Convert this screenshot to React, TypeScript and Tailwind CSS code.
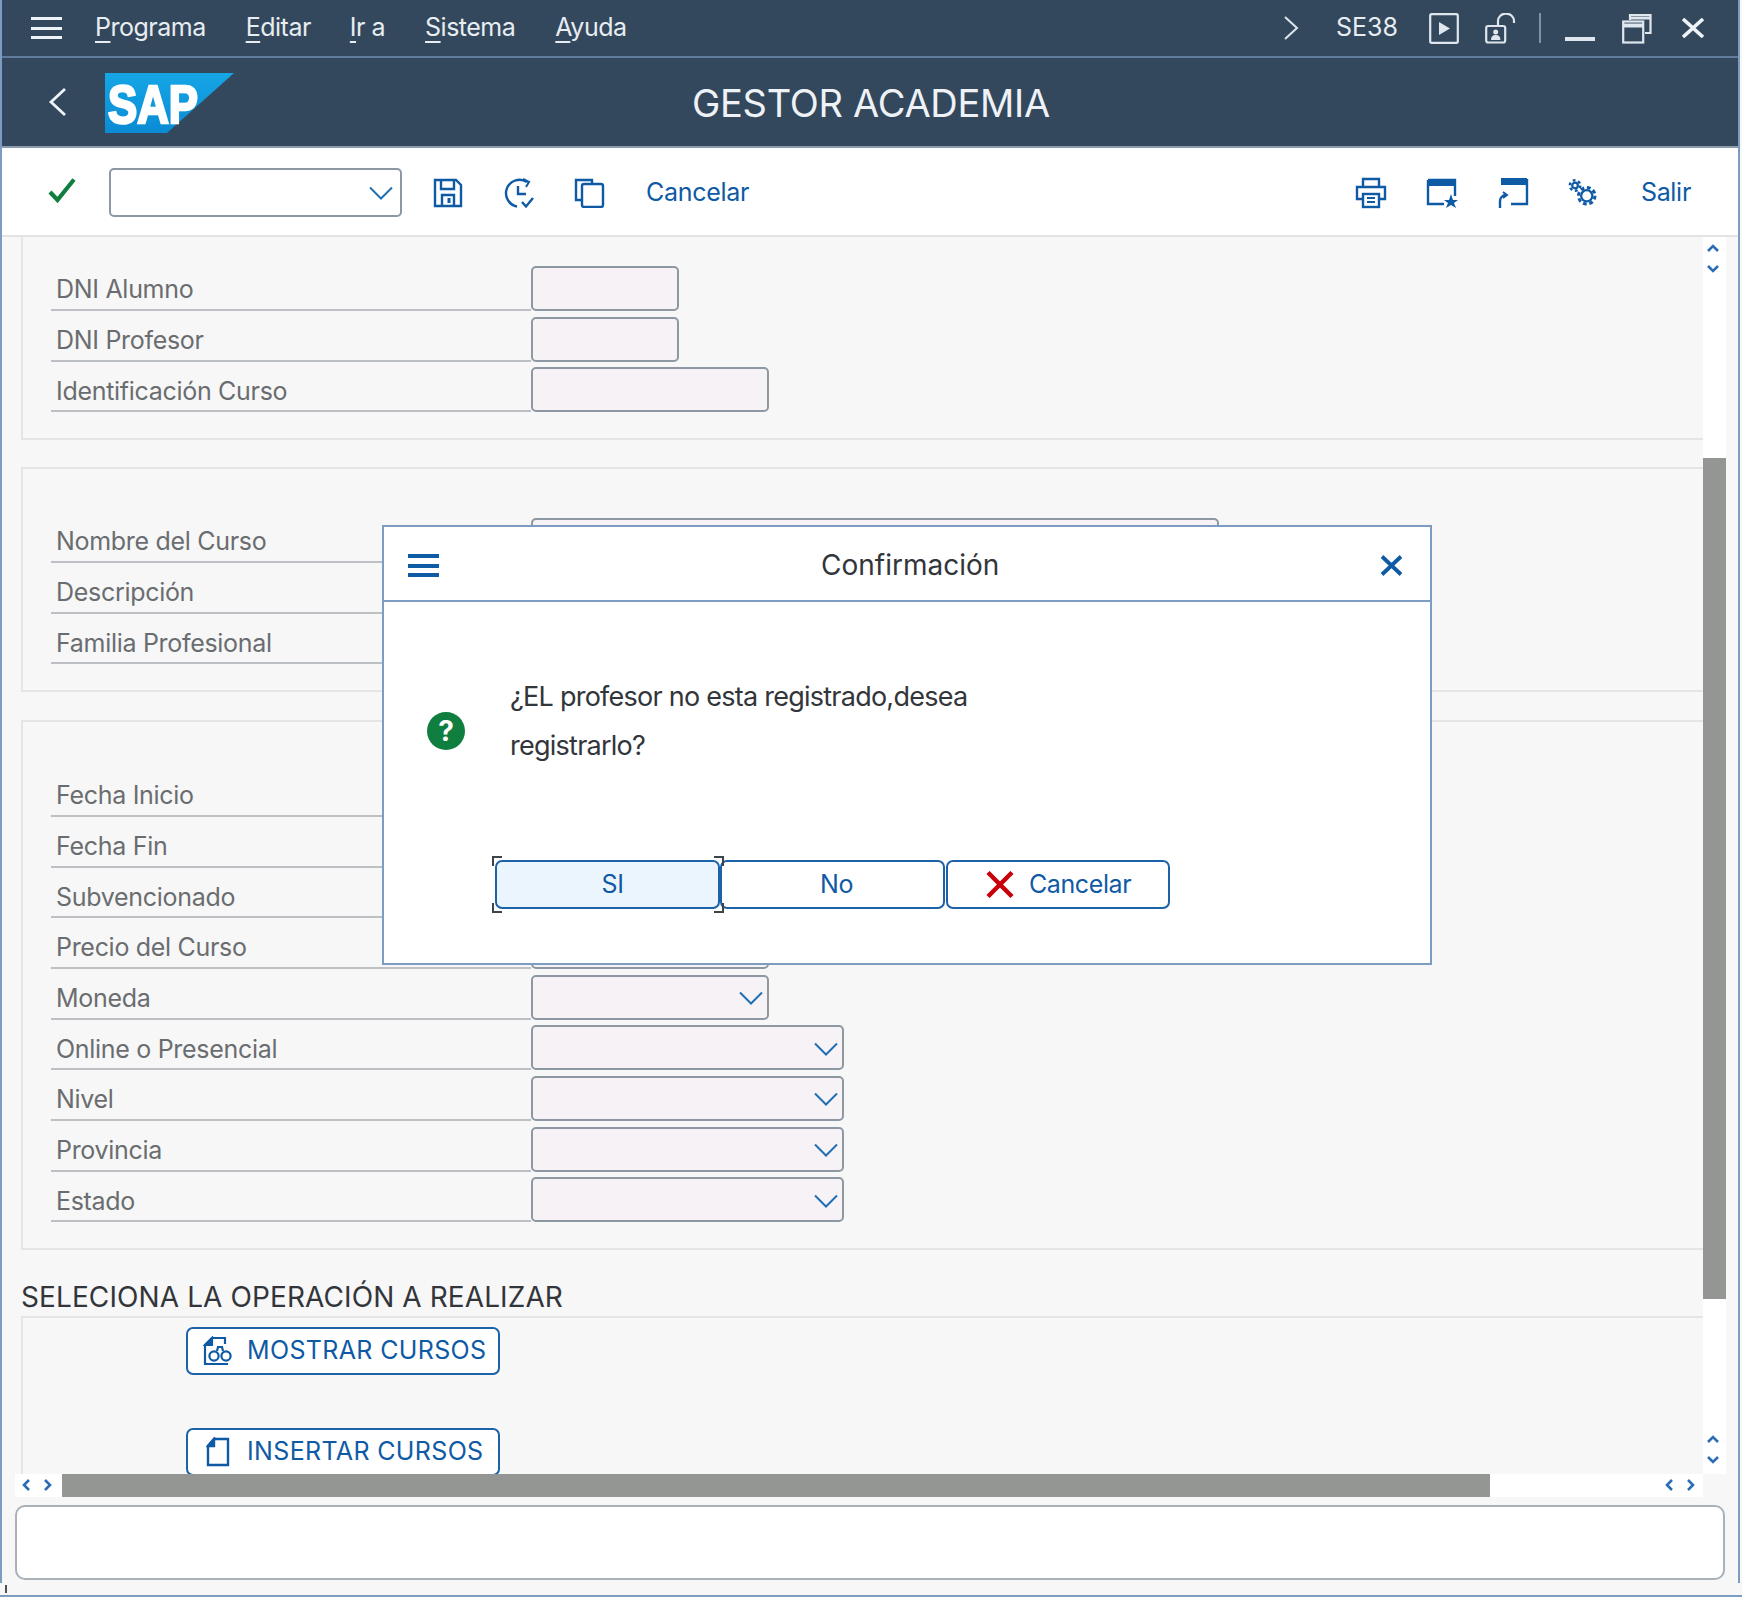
import React from "react";

const font = { fontFamily: "Inter, 'Liberation Sans', sans-serif" };

function Chevron() {
  return (
    <svg width="24" height="14" viewBox="0 0 24 14" fill="none" stroke="#1f6fb5" strokeWidth="2">
      <path d="M1 1.5 L12 12.5 L23 1.5" />
    </svg>
  );
}

function Field({ label, width, select }: { label: string; width?: number; select?: boolean }) {
  return (
    <div className="flex h-[44px] ml-[28px]">
      <div className="w-[480px] h-[44px] border-b-2 border-[#bcc0c4] pl-[5px] pt-[4px] flex items-center text-[25px] tracking-[-0.3px] text-[#6a6d70]">
        {label}
      </div>
      {width ? (
        <div
          className="h-[45px] -mt-[1px] rounded-[5px] border-2 border-[#8d98a3] bg-[#f7f2f6] flex items-center justify-end pr-[4px] pt-[2px]"
          style={{ width }}
        >
          {select ? <Chevron /> : null}
        </div>
      ) : null}
    </div>
  );
}

function Section({ children, className }: { children: React.ReactNode; className: string }) {
  return (
    <div className={"border-l-2 border-b-2 border-[#e5e5e5] flex flex-col gap-[6.67px] shrink-0 " + className}>{children}</div>
  );
}

function TIcon({ children, w = 32, h = 32 }: { children: React.ReactNode; w?: number; h?: number }) {
  return (
    <svg width={w} height={h} viewBox={`0 0 ${w} ${h}`} fill="none" stroke="#0f5aa5" strokeWidth="2.4">
      {children}
    </svg>
  );
}

function VArrows() {
  return (
    <div className="flex flex-col items-center gap-[13px]">
      <svg width="12" height="8" viewBox="0 0 12 8" fill="none" stroke="#2b6cb5" strokeWidth="2.6">
        <path d="M1 7 L6 2 L11 7" />
      </svg>
      <svg width="12" height="8" viewBox="0 0 12 8" fill="none" stroke="#2b6cb5" strokeWidth="2.6">
        <path d="M1 1 L6 6 L11 1" />
      </svg>
    </div>
  );
}

function HArrows() {
  return (
    <div className="flex items-center gap-[14px] pb-[2px]">
      <svg width="8" height="12" viewBox="0 0 8 12" fill="none" stroke="#2b6cb5" strokeWidth="2.6">
        <path d="M7 1 L2 6 L7 11" />
      </svg>
      <svg width="8" height="12" viewBox="0 0 8 12" fill="none" stroke="#2b6cb5" strokeWidth="2.6">
        <path d="M1 1 L6 6 L1 11" />
      </svg>
    </div>
  );
}

function Burger({ color, w, h, t }: { color: string; w: number; h: number; t: number }) {
  return (
    <div className="flex flex-col justify-between" style={{ width: w, height: h }}>
      <div style={{ height: t, background: color }} />
      <div style={{ height: t, background: color }} />
      <div style={{ height: t, background: color }} />
    </div>
  );
}

function ActionButton({ icon, label, className }: { icon: React.ReactNode; label: string; className: string }) {
  return (
    <div
      className={
        "w-[314px] h-[48px] shrink-0 rounded-[7px] border-2 border-[#1c62a8] bg-white flex items-center pl-[14px] text-[25px] tracking-[0.35px] text-[#0f5aa5] " +
        className
      }
    >
      <div className="w-[32px] flex justify-center">{icon}</div>
      <span className="ml-[13px]">{label}</span>
    </div>
  );
}

function Corner({ className }: { className: string }) {
  return <div className={"absolute w-[10px] h-[10px] border-[#3f4448] " + className} />;
}

function MenuItem({ first, rest, className }: { first: string; rest: string; className: string }) {
  return (
    <span className={className}>
      <span className="underline decoration-2 underline-offset-[5px]">{first}</span>
      {rest}
    </span>
  );
}

export default function App() {
  return (
    <div className="w-[1742px] h-[1597px] bg-[#f7f7f7] flex flex-col overflow-hidden" style={font}>
      <div className="w-[1740px] h-[1583px] shrink-0 border-x-2 border-[#7d9cc2] relative flex flex-col">
        {/* Top menu bar */}
        <div className="h-[58px] shrink-0 bg-[#33485c] border-b-2 border-[#607c9b] flex items-center text-[25px] tracking-[-0.5px] text-[#e8edf2]">
          <div className="ml-[29px]">
            <Burger color="#eef3f8" w={31} h={22} t={3} />
          </div>
          <MenuItem first="P" rest="rograma" className="ml-[33px]" />
          <MenuItem first="E" rest="ditar" className="ml-[40px]" />
          <MenuItem first="I" rest="r a" className="ml-[39px]" />
          <MenuItem first="S" rest="istema" className="ml-[40px]" />
          <MenuItem first="A" rest="yuda" className="ml-[40px]" />
          <div className="ml-auto flex items-center">
            <svg width="16" height="24" viewBox="0 0 16 24" fill="none" stroke="#dfe6ee" strokeWidth="2">
              <path d="M2 1 L14 12 L2 23" />
            </svg>
            <span className="ml-[37px] w-[62px] tracking-[0px] text-[#e8edf2]">SE38</span>
            <svg className="ml-[31px]" width="30" height="31" viewBox="0 0 30 31" fill="none" stroke="#dfe6ee" strokeWidth="2.2">
              <rect x="1.2" y="1.2" width="27.6" height="28.6" rx="1.5" />
              <path d="M10 9 L21 15.5 L10 22 Z" fill="#dfe6ee" stroke="none" />
            </svg>
            <svg className="ml-[26px]" width="31" height="31" viewBox="0 0 31 31" fill="none" stroke="#dfe6ee" strokeWidth="2.2">
              <rect x="1.2" y="13" width="19" height="16.5" rx="2" />
              <path d="M13 13 V8 a7.5 7 0 0 1 16 0 V10" />
              <circle cx="10.7" cy="19" r="2.5" fill="#dfe6ee" stroke="none" />
              <path d="M6 27 q0 -5 4.7 -5 q4.7 0 4.7 5 Z" fill="#dfe6ee" stroke="none" />
            </svg>
            <div className="ml-[23px] w-[2px] h-[30px] bg-[#7f93a6]" />
            <div className="ml-[24px] w-[30px] h-[30px] flex items-end pb-[2px]">
              <div className="w-[30px] h-[4px] bg-[#dfe6ee]" />
            </div>
            <svg className="ml-[27px]" width="30" height="31" viewBox="0 0 30 31" fill="none" stroke="#dfe6ee" strokeWidth="2.2">
              <rect x="1.2" y="8.5" width="20" height="21" />
              <path d="M1.2 12.5 H21" strokeWidth="4" />
              <path d="M8 7 V2 H28.5 V20 H23" />
              <path d="M8 5 H28.5" strokeWidth="3" />
            </svg>
            <svg className="ml-[29px] mr-[33px]" width="24" height="20" viewBox="0 0 24 20" fill="none" stroke="#eef3f8" strokeWidth="3.6">
              <path d="M2 1 L22 19 M22 1 L2 19" />
            </svg>
          </div>
        </div>

        {/* Title bar */}
        <div className="h-[90px] shrink-0 bg-[#33485c] border-b-2 border-[#8b9bab] flex items-center relative">
          <svg className="ml-[46px]" width="20" height="30" viewBox="0 0 20 30" fill="none" stroke="#eef3f8" strokeWidth="2.8">
            <path d="M17 2 L3 15 L17 28" />
          </svg>
          <svg className="ml-[37px] mt-[1px]" width="129" height="60" viewBox="0 0 129 60">
            <defs>
              <linearGradient id="sapg" x1="0" y1="0" x2="0" y2="1">
                <stop offset="0" stopColor="#16a6e6" />
                <stop offset="1" stopColor="#0a8bd4" />
              </linearGradient>
            </defs>
            <polygon points="0,0 129,0 62,60 0,60" fill="url(#sapg)" />
            <text
              x="3"
              y="50"
              fontFamily="'Liberation Sans', sans-serif"
              fontWeight="700"
              fontSize="54"
              textLength="90"
              lengthAdjust="spacingAndGlyphs"
              fill="#ffffff"
              stroke="#ffffff"
              strokeWidth="2.6"
            >
              SAP
            </text>
          </svg>
          <div className="absolute left-[690px] top-[22px] text-[38px] leading-[46px] tracking-[-0.3px] text-[#eef2f6]">GESTOR ACADEMIA</div>
        </div>

        {/* Toolbar */}
        <div className="h-[89px] shrink-0 bg-white border-b-2 border-[#e3e3e3] pt-[2px] flex items-center text-[25px] tracking-[-0.3px] text-[#0f5aa5]">
          <svg className="ml-[46px] -mt-[4px]" width="28" height="25" viewBox="0 0 28 25" fill="none" stroke="#107e3e" strokeWidth="4.2">
            <path d="M2 14 L9.5 22 L26 1.5" />
          </svg>
          <div className="ml-[33px] w-[293px] h-[49px] rounded-[5px] border-2 border-[#8d98a3] bg-white flex items-center justify-end pr-[7px]">
            <Chevron />
          </div>
          <div className="ml-[31px]">
            <TIcon w={30} h={30}>
              <path d="M2 2 H23 L28 7 V28 H2 Z" />
              <path d="M8 2 V11 H21 V2" />
              <path d="M9 28 V17 H21 V28" />
              <path d="M16 20 V25" strokeWidth="3" />
            </TIcon>
          </div>
          <div className="ml-[40px]">
            <TIcon w={32} h={32}>
              <path d="M24 5 A13.5 13.5 0 1 0 14 29.5" />
              <path d="M15 9 V17 H23" />
              <path d="M19 25 L23 29.5 L30 21" />
              <path d="M20 2 L26 5 L23 10" strokeWidth="2" />
            </TIcon>
          </div>
          <div className="ml-[39px]">
            <TIcon w={32} h={30}>
              <path d="M8 22 H2 V2 H18 V6" />
              <rect x="8" y="6" width="21" height="23" rx="2" />
            </TIcon>
          </div>
          <span className="ml-[40px]">Cancelar</span>
          <div className="ml-auto flex items-center">
            <TIcon w={32} h={32}>
              <path d="M8 10 V2 H24 V10" />
              <path d="M8 22 H2 V10 H30 V22 H24" />
              <rect x="8" y="17" width="16" height="13" />
              <path d="M12 21 H20 M12 25 H20" strokeWidth="2" />
            </TIcon>
            <div className="ml-[39px]">
              <TIcon w={32} h={30}>
                <path d="M2 2 H29 V18" />
                <path d="M2 2 V26 H18" />
                <rect x="2" y="1" width="27" height="7" fill="#0f5aa5" stroke="none" />
                <path d="M25 16 L27 22 H32 L28 25 L30 30 L25 27 L20 30 L22 25 L18 22 H23 Z" fill="#0f5aa5" stroke="none" />
              </TIcon>
            </div>
            <div className="ml-[39px]">
              <TIcon w={32} h={32}>
                <path d="M30 2 V27 H14" />
                <rect x="4" y="1" width="26" height="7" fill="#0f5aa5" stroke="none" />
                <path d="M9 18 A6 6 0 0 0 3 24 V31" />
                <path d="M6 15 L10 18 L6 21" strokeWidth="2" />
              </TIcon>
            </div>
            <div className="ml-[39px]">
              <svg width="30" height="30" viewBox="0 0 32 30" fill="none" stroke="#0f5aa5">
                <circle cx="7.5" cy="7" r="3" strokeWidth="2.4" />
                <circle cx="7.5" cy="7" r="5.6" strokeWidth="2.6" strokeDasharray="3 2.8" />
                <circle cx="20" cy="18" r="6" strokeWidth="2.4" />
                <circle cx="20" cy="18" r="8.8" strokeWidth="3.2" strokeDasharray="4 2.9" />
              </svg>
            </div>
            <span className="ml-[43px] mr-[47px]">Salir</span>
          </div>
        </div>

        {/* Scrollable work area */}
        <div className="h-[1237px] shrink-0 flex pl-[13px]">
          <div className="w-[1688px] overflow-hidden pl-[6px] flex flex-col">
            <Section className="h-[203px] pt-[30px]">
              <Field label="DNI Alumno" width={148} />
              <Field label="DNI Profesor" width={148} />
              <Field label="Identificación Curso" width={238} />
            </Section>
            <Section className="h-[225px] mt-[27px] border-t-2 pt-[50px]">
              <Field label="Nombre del Curso" width={688} />
              <Field label="Descripción" width={688} />
              <Field label="Familia Profesional" width={313} select />
            </Section>
            <Section className="h-[530px] mt-[28px] border-t-2 pt-[51px]">
              <Field label="Fecha Inicio" width={238} />
              <Field label="Fecha Fin" width={238} />
              <Field label="Subvencionado" width={238} select />
              <Field label="Precio del Curso" width={238} />
              <Field label="Moneda" width={238} select />
              <Field label="Online o Presencial" width={313} select />
              <Field label="Nivel" width={313} select />
              <Field label="Provincia" width={313} select />
              <Field label="Estado" width={313} select />
            </Section>
            <div className="h-[66px] shrink-0 flex items-end pb-[2px] text-[28px] leading-[34px] tracking-[0.1px] text-[#32363a]">
              SELECIONA LA OPERACIÓN A REALIZAR
            </div>
            <div className="border-l-2 border-t-2 border-[#e5e5e5] flex-1 min-h-0 pt-[9px] pl-[163px] flex flex-col">
              <ActionButton
                label="MOSTRAR CURSOS"
                className=""
                icon={
                  <svg width="30" height="30" viewBox="0 0 30 30" fill="none" stroke="#0f5aa5" strokeWidth="2.2">
                    <path d="M9 2 H22 V8" />
                    <path d="M9 2 L2 9 V28 H25" />
                    <path d="M2 9 H9 V2 Z" fill="#0f5aa5" />
                    <circle cx="11" cy="20" r="4.6" />
                    <circle cx="23" cy="20" r="4.6" />
                    <path d="M14 15 L15 11 H19 L20 15" />
                  </svg>
                }
              />
              <ActionButton
                label="INSERTAR CURSOS"
                className="mt-[53px]"
                icon={
                  <svg width="24" height="30" viewBox="0 0 24 30" fill="none" stroke="#0f5aa5" strokeWidth="2.4">
                    <path d="M8 2 H22 V28 H2 V9 Z" />
                    <path d="M2 9 H8 V2 Z" fill="#0f5aa5" />
                  </svg>
                }
              />
            </div>
          </div>
          <div className="w-[23px] flex flex-col">
            <div className="h-[221px] bg-white pt-[7px] pr-[3px] flex justify-center">
              <VArrows />
            </div>
            <div className="h-[841px] bg-[#949693]" />
            <div className="flex-1 bg-white flex items-end justify-center pb-[10px] pr-[3px]">
              <VArrows />
            </div>
          </div>
        </div>

        {/* Horizontal scrollbar */}
        <div className="h-[23px] shrink-0 ml-[13px] w-[1688px] flex">
          <div className="w-[47px] bg-white flex items-center justify-center pr-[3px]">
            <HArrows />
          </div>
          <div className="w-[1428px] bg-[#949693]" />
          <div className="flex-1 bg-white flex items-center justify-end pr-[8px]">
            <HArrows />
          </div>
        </div>

        {/* Status field */}
        <div className="h-[75px] shrink-0 mt-[8px] ml-[13px] w-[1710px] rounded-[10px] border-2 border-[#a9b1b9] bg-white" />

        {/* Confirmation dialog */}
        <div className="absolute left-[380px] top-[525px] w-[1050px] h-[440px] bg-white border-2 border-[#7d9cc2] flex flex-col">
          <div className="h-[75px] shrink-0 border-b-2 border-[#7d9cc2] pt-[4px] flex items-center justify-between relative pl-[24px] pr-[27px]">
            <Burger color="#0f5aa5" w={31} h={23} t={4} />
            <span className="text-[28px] tracking-[0px] text-[#32363a] absolute left-[437px] top-[20px] leading-[36px]">Confirmación</span>
            <svg width="23" height="21" viewBox="0 0 23 21" fill="none" stroke="#0f5aa5" strokeWidth="3.8">
              <path d="M2 1.5 L21 19.5 M21 1.5 L2 19.5" />
            </svg>
          </div>
          <div className="flex pl-[43px] pt-[71px]">
            <div className="w-[38px] h-[38px] mt-[39px] rounded-full bg-[#107e3e] flex items-center justify-center text-white text-[28px] font-bold leading-none">?</div>
            <div className="ml-[45px] w-[560px] text-[27px] leading-[48.7px] tracking-[-0.75px] text-[#32363a]">
              ¿EL profesor no esta registrado,desea
              <br />
              registrarlo?
            </div>
          </div>
          <div className="flex pl-[111px] mt-[90px] text-[25px] tracking-[-0.4px] text-[#0f5aa5]">
            <div className="relative w-[225px] h-[49px] rounded-[7px] border-2 border-[#1c62a8] bg-[#ebf5fe] pl-[10px] flex items-center justify-center">
              SI
              <Corner className="-left-[5px] -top-[6px] border-l-2 border-t-2" />
              <Corner className="-right-[6px] -top-[6px] border-r-2 border-t-2" />
              <Corner className="-left-[5px] -bottom-[6px] border-l-2 border-b-2" />
              <Corner className="-right-[6px] -bottom-[6px] border-r-2 border-b-2" />
            </div>
            <div className="w-[225px] h-[49px] rounded-[7px] border-2 border-[#1c62a8] bg-white pl-[8px] flex items-center justify-center">No</div>
            <div className="ml-[1px] w-[224px] h-[49px] rounded-[7px] border-2 border-[#1c62a8] bg-white flex items-center pl-[38px]">
              <svg width="28" height="27" viewBox="0 0 28 27" fill="none" stroke="#c7000b" strokeWidth="4.4">
                <path d="M2 1.5 L26 25.5 M26 1.5 L2 25.5" />
              </svg>
              <span className="ml-[15px]">Cancelar</span>
            </div>
          </div>
        </div>
      </div>
      <div className="flex-1 border-b-2 border-[#7d9cc2] pl-[5px] pt-[2px]">
        <div className="w-[2px] h-[8px] bg-[#4d5257]" />
      </div>
    </div>
  );
}
